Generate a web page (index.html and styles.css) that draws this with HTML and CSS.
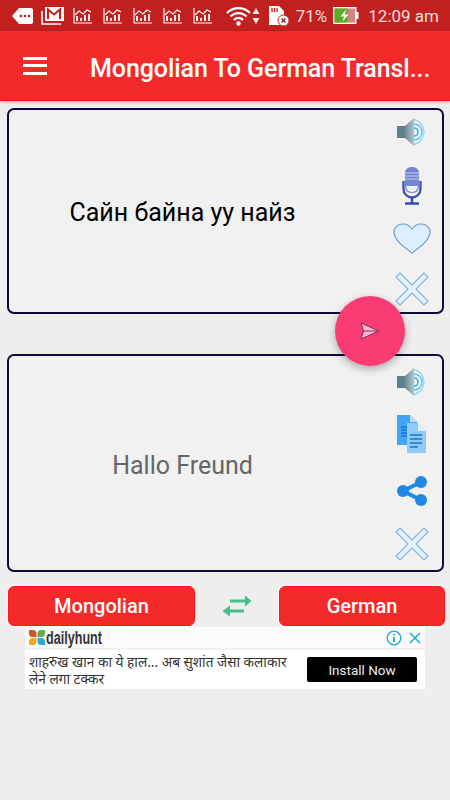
FILE: index.html
```html
<!DOCTYPE html>
<html lang="en">
<head>
<meta charset="utf-8">
<title>Mongolian To German Translator</title>
<link rel="stylesheet" href="styles.css">
</head>
<body>
<svg class="defs" width="0" height="0" aria-hidden="true">
  <defs>
    <linearGradient id="cone" x1="0" y1="0" x2="1" y2="0"><stop offset="0" stop-color="#6f8a94"/><stop offset="1" stop-color="#b4c3ca"/></linearGradient>
  </defs>
  <symbol id="chart" viewBox="0 0 20 17"><path d="M1 1v15h18" fill="none" stroke="#fff" stroke-width="1.100"/><path d="M3 14V9h2v5zM7 14v-3h2v3zM11 14V8h2v6zM15 14V7h2v7z" fill="#fff" opacity=".9"/><path d="M2 8l4-4 4 3 4-4 4 2" fill="none" stroke="#fff" stroke-width="1.100"/></symbol>
  <symbol id="speaker" viewBox="0 0 32 30"><rect x="1" y="9" width="8" height="12" fill="#5f7f8a"/><path d="M9 9l9-8v28l-9-8z" fill="url(#cone)"/><path d="M18 2.500A12.800 12.800 0 0 1 18 27.500" fill="none" stroke="#8fd8fb" stroke-width="1.300"/><path d="M18 7A8 8 0 0 1 18 23" fill="none" stroke="#4fc3f7" stroke-width="1.400"/><path d="M18 11A4 4 0 0 1 18 19" fill="none" stroke="#29b6f6" stroke-width="1.600"/></symbol>
  <symbol id="cross" viewBox="0 0 34 34"><path d="M5 1l12 12L29 1l4 4-12 12 12 12-4 4-12-12L5 33l-4-4 12-12L1 5z" fill="#e3f2fd" stroke="#7fb0de" stroke-width="1.100"/></symbol>
</svg>
<div class="app">
  <div class="status">
    <svg class="si" width="23" height="18" viewBox="0 0 23 18"><path d="M8 1h12a2 2 0 0 1 2 2v12a2 2 0 0 1-2 2H8L1 9z" fill="#fff"/><circle cx="10" cy="9" r="1.300" fill="#c21f1f"/><circle cx="14" cy="9" r="1.300" fill="#c21f1f"/><circle cx="18" cy="9" r="1.300" fill="#c21f1f"/></svg>
    <svg class="si gm" width="24" height="19" viewBox="0 0 24 19"><path d="M1 5v13h19" fill="none" stroke="#fff" stroke-width="1.600"/><rect x="4" y="1" width="19" height="14" fill="#fff"/><path d="M7 13V3.500l6 5 6-5V13" fill="none" stroke="#c21f1f" stroke-width="2"/></svg>
    <svg class="si ch" width="20" height="17" viewBox="0 0 20 17"><use href="#chart"/></svg>
    <svg class="si ch" width="20" height="17" viewBox="0 0 20 17"><use href="#chart"/></svg>
    <svg class="si ch" width="20" height="17" viewBox="0 0 20 17"><use href="#chart"/></svg>
    <svg class="si ch" width="20" height="17" viewBox="0 0 20 17"><use href="#chart"/></svg>
    <svg class="si ch" width="20" height="17" viewBox="0 0 20 17"><use href="#chart"/></svg>
    <span class="grow"></span>
    <svg class="wifi" width="25" height="20" viewBox="0 0 25 20"><path d="M1 7a16 16 0 0 1 23 0M4.500 10.500a11 11 0 0 1 16 0M8 14a6 6 0 0 1 9 0" fill="none" stroke="#fff" stroke-width="2.200"/><circle cx="12.500" cy="17.500" r="2.200" fill="#fff"/></svg>
    <svg class="arrows" width="8" height="16" viewBox="0 0 8 16"><path d="M4 0l3.500 6h-7zM4 16L.5 10h7z" fill="#fff" opacity=".9"/></svg>
    <svg class="sd" width="22" height="22" viewBox="0 0 22 22"><path d="M1 1h10l5 5v14H1z" fill="#fff"/><path d="M4 3v4M6.500 3v4M9 3v4" stroke="#c21f1f" stroke-width="1.300"/><circle cx="15.500" cy="15.500" r="5.500" fill="#fff" stroke="#c21f1f"/><path d="M13.500 13.500l4 4m0-4l-4 4" stroke="#7a2020" stroke-width="1.200"/></svg>
    <span class="pct">71%</span>
    <svg class="batt" width="26" height="17" viewBox="0 0 26 17"><rect x=".75" y=".75" width="22" height="15.500" fill="#d98080" stroke="#fff" stroke-width="1.500"/><rect x="1.500" y="1.500" width="13" height="14" fill="#58ad25"/><rect x="23" y="5" width="2.500" height="7" fill="#fff"/><path d="M13 2.500L7.500 9.500h3.500L9.500 14.500l6-7h-3.500z" fill="#fff"/></svg>
    <span class="time">12:09 am</span>
  </div>
  <header class="toolbar">
    <button class="menu" aria-label="Menu"><span></span><span></span><span></span></button>
    <h1 class="title">Mongolian To German Transl...</h1>
  </header>
  <main class="content">
    <section class="box box-top">
      <p class="text text-src">Сайн байна уу найз</p>
      <div class="tools tools-top">
        <svg class="ic" width="32" height="30" viewBox="0 0 32 30"><use href="#speaker"/></svg>
        <svg class="ic" width="20" height="39" viewBox="0 0 20 39"><rect x="3" y="1" width="14" height="26" rx="6" fill="#7486d2"/><path d="M3 7h14M3 10h14M3 13h14" stroke="#c5cdef" stroke-width="1"/><path d="M4 20a6 6 0 0 0 12 0z" fill="#eef0fa"/><path d="M1.500 15v8a8.500 8.500 0 0 0 17 0v-8" fill="none" stroke="#4453ad" stroke-width="2.400"/><path d="M10 31v6M3 37.500h14" stroke="#3949ab" stroke-width="2.400"/></svg>
        <svg class="ic" width="38" height="31" viewBox="0 0 38 31"><path d="M19 30C8 22 1 16 1 9C1 4 5 1 10 1C14 1 17 3 19 6C21 3 24 1 28 1C33 1 37 4 37 9C37 16 30 22 19 30z" fill="#ddeeff" stroke="#6b9fd4" stroke-width="1.200"/></svg>
        <svg class="ic" width="34" height="34" viewBox="0 0 34 34"><use href="#cross"/></svg>
      </div>
    </section>
    <section class="box box-bottom">
      <p class="text text-dst">Hallo Freund</p>
      <div class="tools tools-bottom">
        <svg class="ic" width="32" height="30" viewBox="0 0 32 30"><use href="#speaker"/></svg>
        <svg class="ic" width="30" height="38" viewBox="0 0 30 38"><path d="M0 0h13l7 7v23H0z" fill="#42a5f5"/><path d="M13 0l7 7h-7z" fill="#bbdefb"/><path d="M4 12h6M4 15h6M4 18h6M4 21h6" stroke="#1976d2" stroke-width="1.300"/><path d="M10 8h11l8 8v22H10z" fill="#90caf9"/><path d="M21 8l8 8h-8z" fill="#e3f2fd"/><path d="M13 20h12M13 24h12M13 28h12M13 32h8" stroke="#1976d2" stroke-width="1.300"/></svg>
        <svg class="ic" width="32" height="32" viewBox="0 0 32 32"><path d="M25 7L7 16l18 9" fill="none" stroke="#1e88e5" stroke-width="4"/><circle cx="25" cy="7" r="6" fill="#1e88e5"/><circle cx="7" cy="16" r="6" fill="#1e88e5"/><circle cx="25" cy="25" r="6" fill="#1e88e5"/></svg>
        <svg class="ic" width="34" height="34" viewBox="0 0 34 34"><use href="#cross"/></svg>
      </div>
    </section>
    <button class="fab" aria-label="Translate"><svg width="20" height="18" viewBox="0 0 20 18"><path d="M1 1l18 8-18 8 2.500-8z" fill="#f9b8cf" stroke="#8e2a55" stroke-width="1"/><path d="M3.500 9H19" stroke="#8e2a55" stroke-width="1"/></svg></button>
    <div class="langs">
      <button class="lang lang-a">Mongolian</button>
      <svg class="swap" width="30" height="24" viewBox="0 0 30 24"><path d="M8 5.500h15V1.500l6.500 5.500-6.500 5.500V8.500H8zM22 15.500H8V11.500L.5 17 8 22.500v-4h14z" fill="#41bf87"/></svg>
      <button class="lang lang-b">German</button>
    </div>
    <aside class="ad">
      <div class="ad-top">
        <div class="logo">
          <svg width="16" height="15" viewBox="0 0 16 15"><path d="M0 0h4a3.500 3.500 0 0 1 3.500 3.500V7H3.500A3.500 3.500 0 0 1 0 3.500z" fill="#d9512c"/><path d="M16 0h-4a3.500 3.500 0 0 0-3.500 3.500V7h4A3.500 3.500 0 0 0 16 3.500z" fill="#6aa84f"/><path d="M0 15h4a3.500 3.500 0 0 0 3.500-3.500V8H3.500A3.500 3.500 0 0 0 0 11.500z" fill="#f4a81c"/><path d="M16 15h-4a3.500 3.500 0 0 1-3.500-3.500V8h4A3.500 3.500 0 0 1 16 11.500z" fill="#29a9d6"/></svg>
          <span class="brand">dailyhunt</span>
        </div>
        <div class="ad-marks">
          <svg width="16" height="16" viewBox="0 0 16 16"><circle cx="8" cy="8" r="6.800" fill="none" stroke="#19a9d6" stroke-width="1.300"/><path d="M8 7v5M8 4v1.600" stroke="#19a9d6" stroke-width="1.800"/></svg>
          <svg width="12" height="12" viewBox="0 0 12 12"><path d="M1 1l10 10M11 1L1 11" stroke="#19a9d6" stroke-width="1.500"/></svg>
        </div>
      </div>
      <div class="ad-body">
        <p class="ad-text">शाहरुख खान का ये हाल... अब सुशांत जैसा कलाकार लेने लगा टक्कर</p>
        <span class="install">Install Now</span>
      </div>
    </aside>
  </main>
</div>
</body>
</html>
```
FILE: styles.css
```css
* { box-sizing: border-box; }
html, body { margin: 0; padding: 0; }
body { width: 450px; height: 800px; overflow: hidden; background: #eeeeee; font-family: Roboto, "Liberation Sans", sans-serif; }
.defs { position: absolute; }
.app { height: 800px; display: flex; flex-direction: column; }

.status { height: 31px; background: #c21f1f; display: flex; align-items: center; padding: 0 11px 0 11px; color: #f6dede; }
.si { display: block; flex: none; }
.gm { margin-left: 7px; }
.ch { margin-left: 10px; }
.status .gm + .ch { margin-left: 8px; }
.grow { flex: 1; }
.wifi { display: block; }
.arrows { display: block; margin-left: 1px; }
.sd { display: block; margin-left: 8px; margin-top: 1px; }
.pct { font-size: 17px; margin-left: 6px; }
.batt { display: block; margin-left: 6px; }
.time { font-size: 17px; margin-left: 9px; }

.toolbar { height: 70px; background: #f42a2a; border-bottom: 1px solid #ff1111; display: flex; align-items: center; padding: 0 0 0 23px; box-shadow: 0 1px 3px rgba(0,0,0,.25); }
.menu { width: 24px; height: 18px; padding: 0; border: 0; background: none; display: flex; flex-direction: column; justify-content: space-between; flex: none; }
.menu span { display: block; height: 3px; background: #fff; }
.title { margin: 6px 0 0 43px; font-size: 25px; line-height: 32px; font-weight: 500; letter-spacing: -.07px; color: #fff; white-space: nowrap; }

.content { position: relative; flex: 1; padding: 7px 5px 0 7px; display: flex; flex-direction: column; }
.box { width: 437px; background: #f1f1f1; border: 2px solid #0c0c3c; border-radius: 7px; display: flex; align-items: center; justify-content: center; position: relative; padding-right: 60px; }
.box-top { height: 206px; }
.box-bottom { height: 218px; margin-top: 40px; }
.text { margin: 0 26px 0 0; font-size: 25px; line-height: 30px; }
.text-src { color: #000; padding-top: 4px; }
.text-dst { color: #666; padding-top: 6px; }
.tools { position: absolute; right: 0; top: 0; bottom: 0; width: 60px; display: flex; flex-direction: column; align-items: center; }
.tools-top { padding-top: 7px; }
.tools-top .ic:nth-child(2) { margin-top: 19px; }
.tools-top .ic:nth-child(3) { margin-top: 18px; }
.tools-top .ic:nth-child(4) { margin-top: 18px; }
.tools-bottom { padding-top: 11px; }
.tools-bottom .ic:nth-child(2) { margin-top: 18px; }
.tools-bottom .ic:nth-child(3) { margin-top: 22px; }
.tools-bottom .ic:nth-child(4) { margin-top: 20px; }
.ic { display: block; flex: none; }

.fab { position: absolute; left: 335px; top: 195px; width: 70px; height: 70px; border-radius: 50%; border: 0; padding: 0; background: #fb3b74; box-shadow: 0 3px 8px rgba(0,0,0,.3); display: flex; align-items: center; justify-content: center; }

.langs { margin-top: 14px; margin-left: 1px; width: 437px; display: flex; align-items: center; justify-content: space-between; }
.lang { height: 40px; border: 1px solid #ff1a1a; border-radius: 6px; background: #f42a2a; color: #fff; font: 500 20px Roboto, "Liberation Sans", sans-serif; padding: 0; box-shadow: 0 0 0 1px #fff; }
.lang-a { width: 187px; }
.lang-b { width: 166px; }
.swap { display: block; }

.ad { width: 400px; margin-left: 18px; margin-top: 1px; background: #fff; height: 62px; display: flex; flex-direction: column; }
.ad-top { height: 23px; display: flex; align-items: center; justify-content: space-between; padding: 0 4px 0 4px; background: #fbfbfb; border-bottom: 2px solid #f0f0f0; }
.logo { display: flex; align-items: center; gap: 1px; }
.brand { font: 700 18px/20px "Liberation Sans Narrow", "Liberation Sans", sans-serif; color: #333; transform: scaleX(.7); transform-origin: left center; }
.ad-marks { display: flex; align-items: center; gap: 7px; }
.ad-body { flex: 1; display: flex; align-items: center; justify-content: space-between; padding: 0 8px 0 4px; }
.ad-text { margin: 0; width: 270px; font: 13.7px/17px "Noto Sans", "Lohit Devanagari", "DejaVu Sans", sans-serif; color: #333; }
.install { width: 110px; height: 25px; background: #000; border-radius: 2px; color: #eee; font: 13.5px/26px Roboto, "Liberation Sans", sans-serif; text-align: center; }
```
